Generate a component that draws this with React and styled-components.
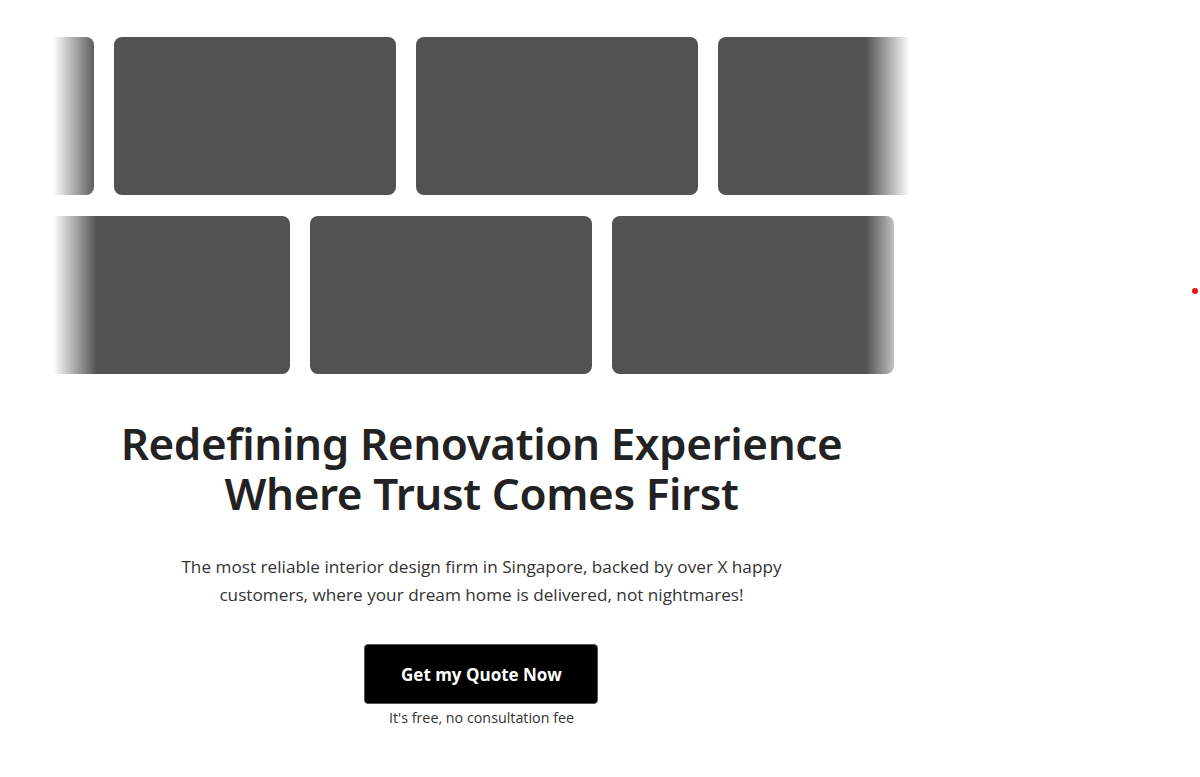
import React from 'react'
import styled, { createGlobalStyle } from 'styled-components'

const GlobalStyle = createGlobalStyle`
  * { box-sizing: border-box; }
  body {
    margin: 0;
    background: #fff;
    font-family: "Open Sans", "Liberation Sans", sans-serif;
    color: #222;
  }
`

const rows = [
  { offset: -241, count: 4 },
  { offset: -45, count: 3 },
]

function App() {
  return (
    <Page>
      <GlobalStyle />
      <Hero>
        <Gallery>
          {rows.map((row, i) => (
            <Track key={i} $offset={row.offset}>
              {Array.from({ length: row.count }).map((_, j) => (
                <Card key={j} />
              ))}
            </Track>
          ))}
        </Gallery>
        <Content>
          <Title>
            Redefining Renovation Experience
            <br />
            Where Trust Comes First
          </Title>
          <Lead>
            The most reliable interior design firm in Singapore, backed by over X happy
            <br />
            customers, where your dream home is delivered, not nightmares!
          </Lead>
          <QuoteButton>Get my Quote Now</QuoteButton>
          <Note>It's free, no consultation fee</Note>
        </Content>
      </Hero>
      <Dot />
    </Page>
  )
}

const Page = styled.div`
  position: relative;
  width: 1200px;
  min-height: 777px;
  padding-top: 37px;
`

const Hero = styled.section`
  width: 857px;
  margin-left: 53px;
  display: flex;
  flex-direction: column;
  align-items: center;
`

const Gallery = styled.div`
  width: 100%;
  display: flex;
  flex-direction: column;
  gap: 21px;
  overflow: hidden;
  -webkit-mask-image: linear-gradient(to right, transparent 0, #000 44px, #000 calc(100% - 44px), transparent 100%);
  mask-image: linear-gradient(to right, transparent 0, #000 44px, #000 calc(100% - 44px), transparent 100%);
`

const Track = styled.div`
  display: flex;
  gap: 20px;
  margin-left: ${p => p.$offset}px;
`

const Card = styled.div`
  flex: 0 0 282px;
  height: 158px;
  border-radius: 8px;
  background: #525252;
`

const Content = styled.div`
  display: flex;
  flex-direction: column;
  align-items: center;
  text-align: center;
  padding-top: 44px;
`

const Title = styled.h1`
  margin: 0;
  font-family: "Noto Sans", "Open Sans", sans-serif;
  font-weight: 600;
  font-size: 44px;
  line-height: 50px;
  letter-spacing: -0.4px;
  color: #222;
`

const Lead = styled.p`
  margin: 35px 0 0;
  font-size: 17.2px;
  line-height: 28px;
  color: #333;
`

const QuoteButton = styled.button`
  margin-top: 35px;
  width: 234px;
  height: 60px;
  border: 1px solid #555;
  border-radius: 4px;
  background: #000;
  color: #fff;
  font-family: "Open Sans", sans-serif;
  font-weight: 700;
  font-size: 17px;
  cursor: pointer;
`

const Note = styled.div`
  margin-top: 4px;
  font-size: 14.3px;
  color: #333;
`

const Dot = styled.span`
  position: absolute;
  left: 1192px;
  top: 288px;
  width: 6px;
  height: 6px;
  border-radius: 50%;
  background: #e8161b;
`

export default App
